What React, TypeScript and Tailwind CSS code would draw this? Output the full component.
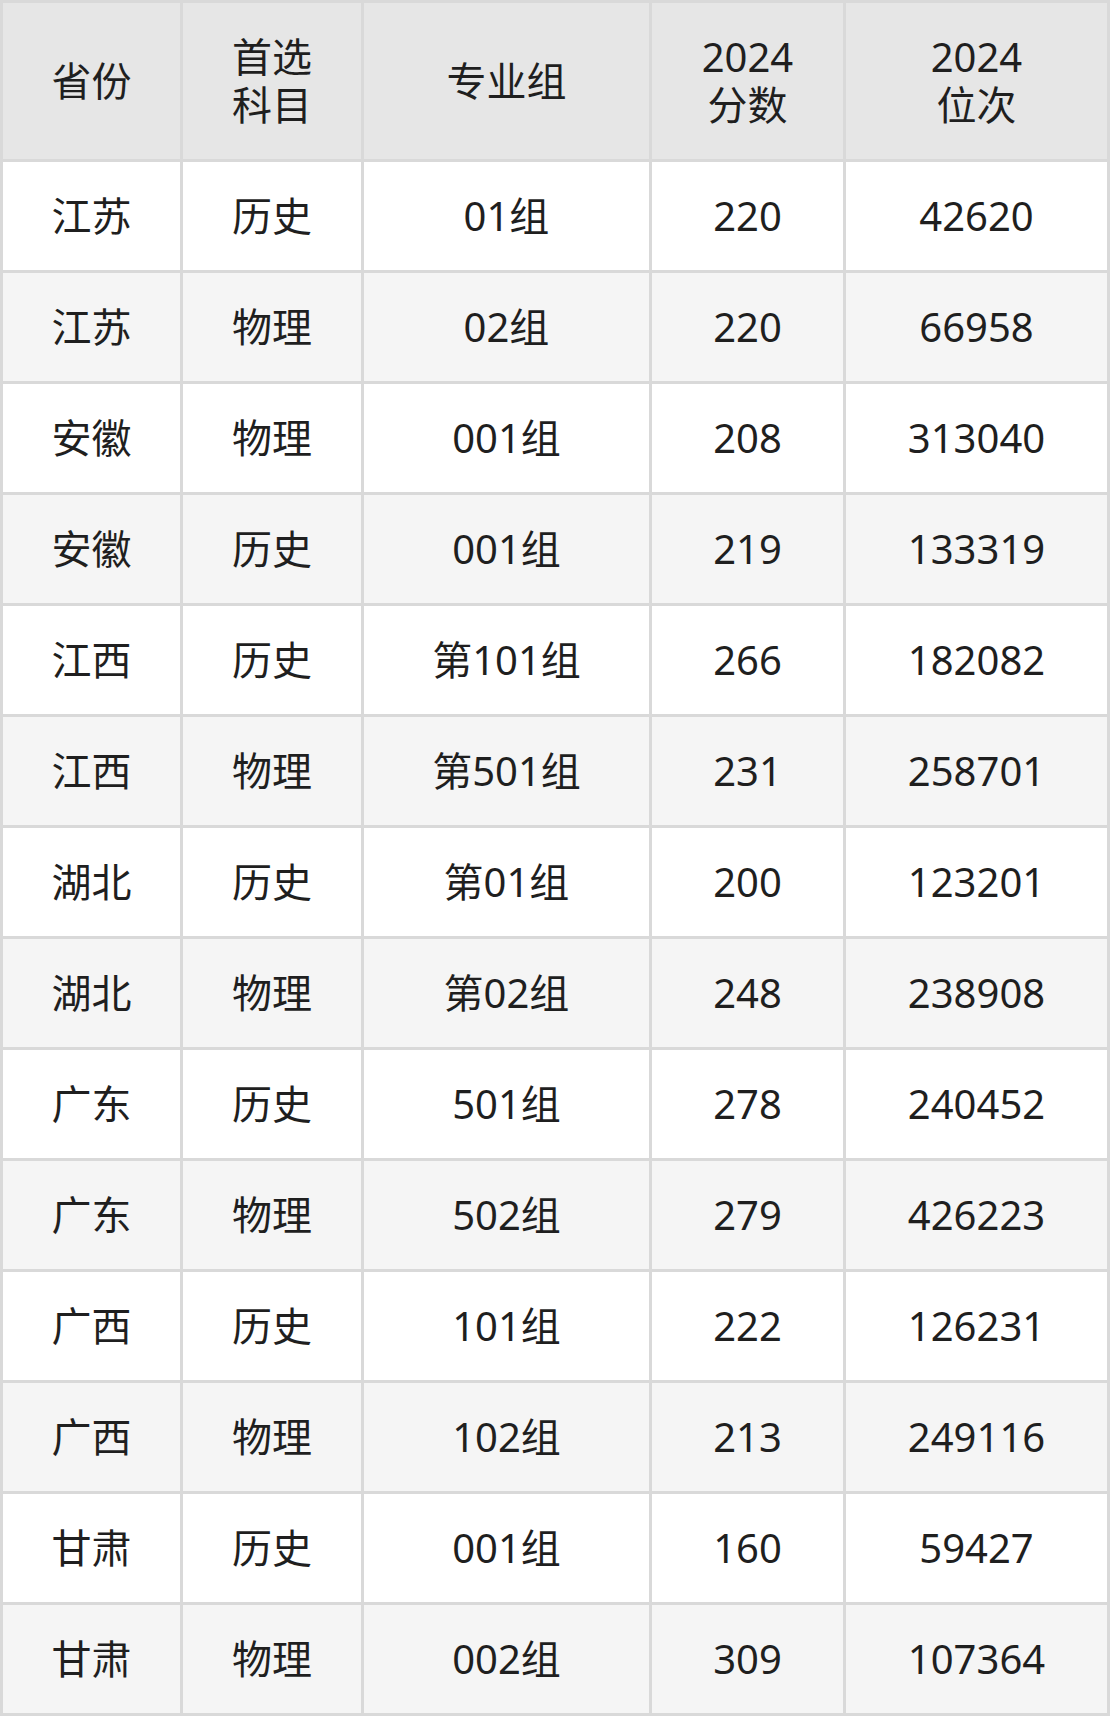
import React from "react";

const rows: [string, string, string, string, string][] = [
  ["江苏", "历史", "01组", "220", "42620"],
  ["江苏", "物理", "02组", "220", "66958"],
  ["安徽", "物理", "001组", "208", "313040"],
  ["安徽", "历史", "001组", "219", "133319"],
  ["江西", "历史", "第101组", "266", "182082"],
  ["江西", "物理", "第501组", "231", "258701"],
  ["湖北", "历史", "第01组", "200", "123201"],
  ["湖北", "物理", "第02组", "248", "238908"],
  ["广东", "历史", "501组", "278", "240452"],
  ["广东", "物理", "502组", "279", "426223"],
  ["广西", "历史", "101组", "222", "126231"],
  ["广西", "物理", "102组", "213", "249116"],
  ["甘肃", "历史", "001组", "160", "59427"],
  ["甘肃", "物理", "002组", "309", "107364"],
];

const headers: string[][] = [
  ["省份"],
  ["首选", "科目"],
  ["专业组"],
  ["2024", "分数"],
  ["2024", "位次"],
];

export default function App() {
  return (
    <div
      className="w-[1110px] h-[1716px] bg-[#d9d9d9] p-[3px] text-[#1f1f1f] text-[40px]"
      style={{ fontFamily: '"Noto Sans", "Noto Sans CJK SC", sans-serif' }}
    >
      <div className="grid grid-cols-[177px_178px_285px_191px_261px] grid-rows-[156px_repeat(14,108px)] gap-[3px]">
        {headers.map((h, i) => (
          <div
            key={"h" + i}
            className="bg-[#e6e6e6] flex flex-col items-center justify-center leading-[48px]"
          >
            {h.map((line, j) => (
              <span key={j}>{line}</span>
            ))}
          </div>
        ))}
        {rows.map((r, ri) =>
          r.map((c, ci) => (
            <div
              key={ri + "-" + ci}
              className={
                "flex items-center justify-center leading-none " +
                (ri % 2 === 0 ? "bg-white" : "bg-[#f5f5f5]")
              }
            >
              {c}
            </div>
          ))
        )}
      </div>
    </div>
  );
}
